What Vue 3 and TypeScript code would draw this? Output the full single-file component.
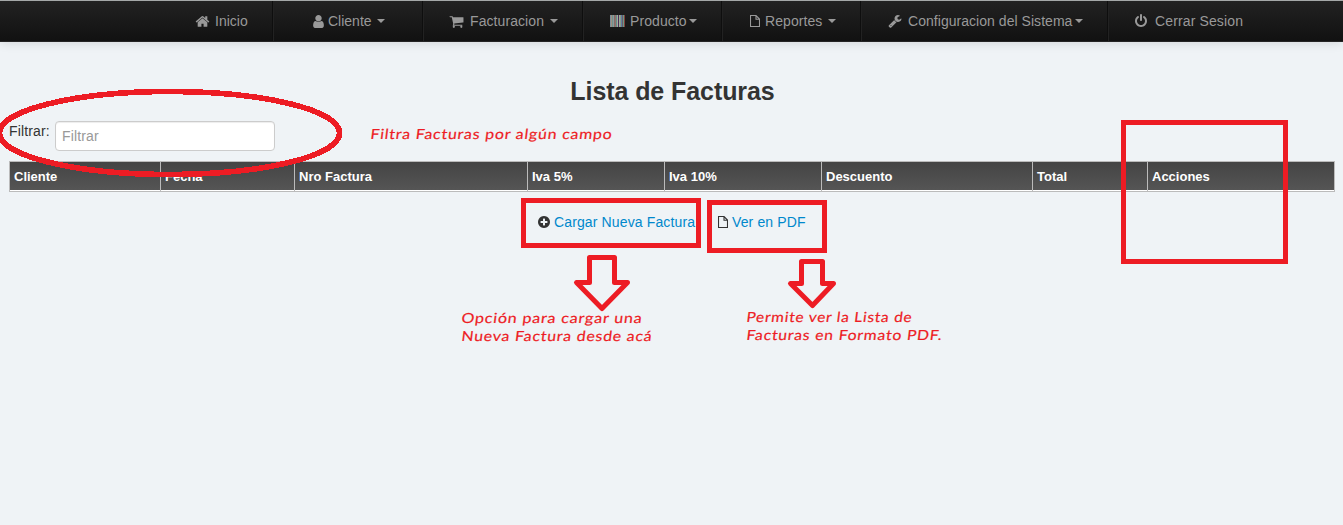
<script setup lang="ts">
interface NavItem {
  id: string
  label: string
  icon: string
  caret: boolean
}

interface Note {
  x: number
  y: number
  width: number
  text: string
}

const paths: Record<string, string> = {
  home: 'M1472 992v480q0 26-19 45t-45 19h-384v-384h-256v384h-384q-26 0-45-19t-19-45v-480q0-1 .5-3t.5-3l575-474 575 474q1 2 1 6zm223-69l-62 74q-8 9-21 11h-3q-13 0-21-7l-692-577-692 577q-12 8-24 7-13-2-21-11l-62-74q-8-10-7-23.5t11-21.5l719-599q32-26 76-26t76 26l244 204v-195q0-14 9-23t23-9h192q14 0 23 9t9 23v408l219 182q10 8 11 21.5t-7 23.5z',
  user: 'M1536 1399q0 109-62.5 187t-150.5 78h-854q-88 0-150.5-78t-62.5-187q0-85 8.5-160.5t31.5-152 58.5-131 94-89 134.5-34.5q131 128 313 128t313-128q76 0 134.5 34.5t94 89 58.5 131 31.5 152 8.5 160.5zm-256-887q0 159-112.5 271.5t-271.5 112.5-271.5-112.5-112.5-271.5 112.5-271.5 271.5-112.5 271.5 112.5 112.5 271.5z',
  cart: 'M704 1536q0 52-38 90t-90 38-90-38-38-90 38-90 90-38 90 38 38 90zm896 0q0 52-38 90t-90 38-90-38-38-90 38-90 90-38 90 38 38 90zm128-1088v512q0 24-16.5 42.5t-40.5 21.5l-1044 122q13 60 13 70 0 16-24 64h920q26 0 45 19t19 45-19 45-45 19h-1024q-26 0-45-19t-19-45q0-11 8-31.5t16-36 21.5-40 15.5-29.5l-177-823h-204q-26 0-45-19t-19-45 19-45 45-19h256q16 0 28.5 6.5t19.5 15.5 13 24.5 8 26 5.5 29.5 4.5 26h1201q26 0 45 19t19 45z',
  wrench: 'M448 1472q0-26-19-45t-45-19-45 19-19 45 19 45 45 19 45-19 19-45zm644-420l-682 682q-37 37-90 37-52 0-91-37l-106-108q-38-36-38-90 0-53 38-91l681-681q39 98 114.5 173.5t173.5 114.5zm634-435q0 39-23 106-47 134-164.5 217.5t-258.5 83.5q-185 0-316.5-131.5t-131.5-316.5 131.5-316.5 316.5-131.5q58 0 121.5 16.5t107.5 46.5q16 11 16 28t-16 28l-293 169v224l193 107q5-3 79-48.5t135.5-81 70.5-35.5q15 0 23.5 10t8.5 25z',
  power: 'M1664 896q0 156-61 298t-164 245-245 164-298 61-298-61-245-164-164-245-61-298q0-182 80.5-343t226.5-270q43-32 95.5-25t83.5 50q32 42 24.5 94.5t-49.5 84.5q-98 74-151.5 181t-53.5 228q0 104 40.5 198.5t109.5 163.5 163.5 109.5 198.5 40.5 198.5-40.5 163.5-109.5 109.5-163.5 40.5-198.5q0-121-53.5-228t-151.5-181q-42-32-49.5-84.5t24.5-94.5q31-43 84-50t95 25q146 109 226.5 270t80.5 343zm-640-768v640q0 52-38 90t-90 38-90-38-38-90v-640q0-52 38-90t90-38 90 38 38 90z',
  plus: 'M1344 960v-128q0-26-19-45t-45-19h-256v-256q0-26-19-45t-45-19h-128q-26 0-45 19t-19 45v256h-256q-26 0-45 19t-19 45v128q0 26 19 45t45 19h256v256q0 26 19 45t45 19h128q26 0 45-19t19-45v-256h256q26 0 45-19t19-45zm320-64q0 209-103 385.5t-279.5 279.5-385.5 103-385.5-103-279.5-279.5-103-385.5 103-385.5 279.5-279.5 385.5-103 385.5 103 279.5 279.5 103 385.5z',
}

// colour of each one-pixel stripe in the barcode icon, left to right
const bars: string[] = [
  '#7d8f9c', '#a09080', '#6f9390', '#8f9a98', '#7c6f70', '#996f66', '#5f8f8b', '#a5aca0',
  '#4a2f5c', '#9fae95', '#8d9788', '#5b7fa0', '#6c5a68', '#6a9a86', '#84403a',
]

const items: NavItem[] = [
  { id: 'inicio', label: 'Inicio', icon: 'home', caret: false },
  { id: 'cliente', label: 'Cliente', icon: 'user', caret: true },
  { id: 'facturacion', label: 'Facturacion', icon: 'cart', caret: true },
  { id: 'producto', label: 'Producto', icon: 'barcode', caret: true },
  { id: 'reportes', label: 'Reportes', icon: 'file', caret: true },
  { id: 'configuracion', label: 'Configuracion del Sistema', icon: 'wrench', caret: true },
  { id: 'cerrar', label: 'Cerrar Sesion', icon: 'power', caret: false },
]

const columns: string[] = ['Cliente', 'Fecha', 'Nro Factura', 'Iva 5%', 'Iva 10%', 'Descuento', 'Total', 'Acciones']

const notes: Note[] = [
  { x: 370, y: 139, width: 242, text: 'Filtra Facturas por algún campo' },
  { x: 461, y: 323, width: 181, text: 'Opción para cargar una' },
  { x: 461, y: 341, width: 191, text: 'Nueva Factura desde acá' },
  { x: 746, y: 322, width: 166, text: 'Permite ver la Lista de' },
  { x: 746, y: 340, width: 196, text: 'Facturas en Formato PDF.' },
]
</script>

<template>
  <div class="page">
    <nav class="navbar">
      <a v-for="item in items" :key="item.id" class="nav-item" :class="item.id">
        <svg v-if="item.icon === 'barcode'" class="icon barcode" viewBox="0 0 15 12" shape-rendering="crispEdges">
          <rect v-for="(bar, i) in bars" :key="i" :x="i" y="0" width="1" height="12" :fill="bar" />
        </svg>
        <svg v-else-if="item.icon === 'file'" class="icon file" viewBox="0 0 10 12">
          <path d="M.5.5H6L9.5 4V11.5H.5ZM6 .5V4.2H9.5" />
        </svg>
        <svg v-else class="icon" viewBox="0 0 1792 1792"><path :d="paths[item.icon]" /></svg>
        <span class="label">{{ item.label }}</span>
        <i v-if="item.caret" class="caret"></i>
      </a>
    </nav>

    <main class="content">
      <h3 class="title">Lista de Facturas</h3>
      <div class="filter">
        <label for="filtro">Filtrar:</label>
        <input id="filtro" type="text" placeholder="Filtrar" />
      </div>
      <div class="table-head">
        <div v-for="column in columns" :key="column" class="th">{{ column }}</div>
      </div>
      <div class="actions">
        <svg class="icon" viewBox="0 0 1792 1792"><path :d="paths.plus" /></svg>
        <a class="new">Cargar Nueva Factura</a>
        <span class="divider">|</span>
        <svg class="icon file" viewBox="0 0 10 12"><path d="M.5.5H6L9.5 4V11.5H.5ZM6 .5V4.2H9.5" /></svg>
        <a>Ver en PDF</a>
      </div>
    </main>

    <svg class="notes" viewBox="0 0 1343 525">
      <g class="marks">
        <ellipse cx="169.5" cy="133" rx="170" ry="41.5" shape-rendering="crispEdges" />
        <rect x="523.5" y="200.5" width="175" height="45" />
        <rect x="709.5" y="202.5" width="115" height="48" />
        <rect x="1123.5" y="122.5" width="162" height="139" />
        <path d="M589.5 257.5H614.5V282.5H627.5L602 308.5L576.5 282.5H589.5Z" />
        <path d="M801.5 261.5H822.5V283.5H833.5L812.5 305.5L790.5 283.5H801.5Z" />
      </g>
      <g class="words">
        <text
          v-for="note in notes"
          :key="note.text"
          :transform="`translate(${note.x} ${note.y}) skewX(-7)`"
          :textLength="note.width"
          lengthAdjust="spacingAndGlyphs"
        >{{ note.text }}</text>
      </g>
    </svg>
  </div>
</template>

<style>
body {
  margin: 0;
  background: #eff3f6;
}
</style>

<style scoped>
.page {
  position: relative;
  width: 1343px;
  height: 525px;
  overflow: hidden;
  background: #eff3f6;
  color: #333;
  font: 14px/20px "Liberation Sans", Arial, sans-serif;
}
.navbar {
  display: flex;
  box-sizing: border-box;
  height: 42px;
  padding-left: 170px;
  border-top: 1px solid #a5a8a8;
  border-bottom: 1px solid #252525;
  background: linear-gradient(#222, #111);
  box-shadow: 0 1px 10px rgba(0, 0, 0, 0.12);
  color: #999;
}
.nav-item {
  display: flex;
  flex: none;
  align-items: center;
  box-sizing: border-box;
  border-right: 1px solid #222;
  box-shadow: inset -1px 0 #0e0e0e;
  white-space: nowrap;
}
.icon {
  flex: none;
  width: 14px;
  height: 14px;
  fill: currentColor;
}
.icon.barcode {
  width: 15px;
  height: 12px;
}
.icon.file {
  width: 10px;
  height: 12px;
  fill: none;
  stroke: currentColor;
  stroke-width: 1.1;
}
.caret {
  border: 4px solid transparent;
  border-top-color: #999;
  border-bottom: 0;
}
.inicio { width: 104px; padding-left: 25px; }
.inicio .icon { width: 15px; height: 15px; }
.inicio .label { margin-left: 5px; }
.cliente { width: 150px; padding-left: 37px; }
.cliente .icon { width: 15px; height: 15px; }
.cliente .label { width: 49px; margin-left: 2px; }
.facturacion { width: 160px; padding-left: 25px; }
.facturacion .icon { width: 15px; height: 15px; }
.facturacion .label { width: 80px; margin-left: 6px; letter-spacing: 0.08px; }
.producto { width: 139px; padding-left: 26px; }
.producto .label { width: 59px; margin-left: 5px; letter-spacing: 0.08px; }
.reportes { width: 139px; padding-left: 27px; }
.reportes .label { width: 63px; margin-left: 5px; letter-spacing: 0.08px; }
.configuracion { width: 247px; padding-left: 26px; }
.configuracion .label { width: 167px; margin-left: 6px; letter-spacing: 0.04px; }
.cerrar { padding-left: 25px; border: 0; box-shadow: none; }
.cerrar .label { margin-left: 7px; letter-spacing: 0.13px; }
.content {
  padding: 29px 8px 0 9px;
}
.title {
  margin: 0;
  padding-left: 1px;
  font-size: 25px;
  line-height: 40px;
  letter-spacing: -0.08px;
  text-align: center;
}
.filter {
  display: flex;
  align-items: flex-start;
  height: 30px;
  margin-top: 10px;
}
.filter label {
  width: 46px;
  letter-spacing: 0.15px;
}
.filter input {
  box-sizing: border-box;
  width: 220px;
  height: 30px;
  padding: 4px 6px;
  border: 1px solid #ccc;
  border-radius: 4px;
  outline: 0;
  background: #fff;
  box-shadow: inset 0 1px 1px rgba(0, 0, 0, 0.075);
  font: inherit;
}
.filter input::placeholder {
  color: #999;
  letter-spacing: 0.15px;
  opacity: 1;
}
.table-head {
  display: grid;
  grid-template-columns: 151px 134px 233px 137px 157px 211px 115px 1fr;
  box-sizing: border-box;
  height: 31px;
  margin-top: 10px;
  border: solid #bbb;
  border-width: 1px 1px 1px 0;
  background: linear-gradient(#444, #555 28px, #fff 28px);
}
.th {
  padding-left: 4px;
  border-left: 1px solid #bbb;
  color: #fff;
  font-size: 13px;
  font-weight: bold;
  line-height: 29px;
}
.actions {
  display: flex;
  align-items: center;
  height: 20px;
  margin-top: 20px;
  padding-left: 528px;
}
.actions a {
  margin-left: 3px;
  color: #08c;
  letter-spacing: 0.13px;
  white-space: nowrap;
}
.actions .new {
  width: 144px;
}
.actions .divider {
  width: 20px;
  color: #08c;
}
.actions .file + a {
  margin-left: 4px;
}
.notes {
  position: absolute;
  inset: 0;
  width: 1343px;
  height: 525px;
  pointer-events: none;
}
.marks {
  fill: none;
  stroke: #ed1c24;
  stroke-width: 5;
}
.marks ellipse {
  stroke-width: 5.6;
}
.marks path {
  stroke-linejoin: round;
}
.words {
  fill: #ed1c24;
  stroke: #ed1c24;
  stroke-width: 0.2;
  font: 14px Lato, "Open Sans", sans-serif;
  letter-spacing: 0.7px;
}
</style>
